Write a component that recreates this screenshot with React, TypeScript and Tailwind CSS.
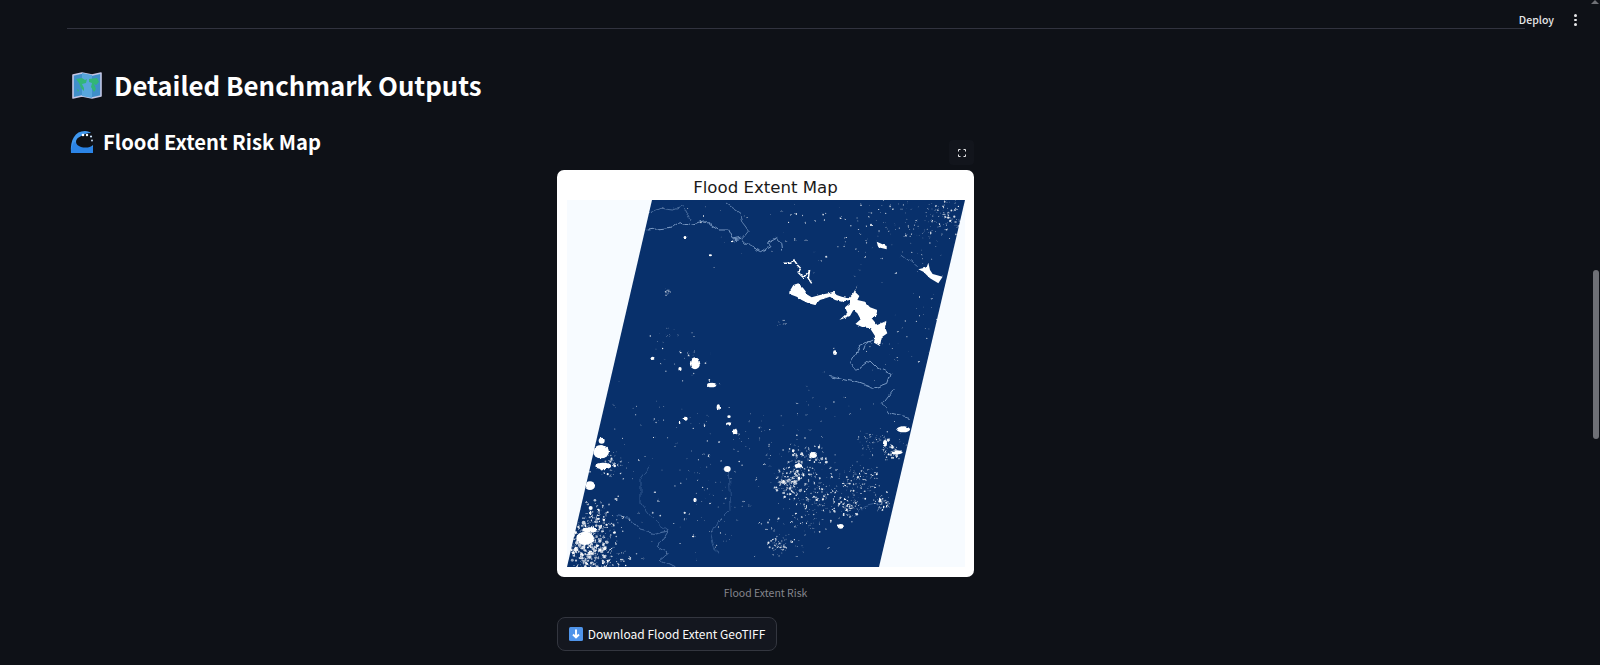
const sans = "font-['Noto_Sans_CJK_SC','Noto_Sans',sans-serif]";

// cx, cy, spread, count, max radius -- in zoom coordinates of the map crop
type Cluster = [number, number, number, number, number];

const upperClusters: Cluster[] = [
  [1220, 250, 30, 90, 3],
  [1140, 300, 60, 90, 2],
  [960, 280, 90, 60, 2.4],
  [760, 260, 95, 36, 2.6],
  [1160, 560, 45, 30, 2.2],
  [1080, 640, 60, 30, 2.6],
  [440, 700, 40, 18, 3],
  [380, 620, 32, 18, 1.5],
  [480, 290, 85, 14, 2],
  [382, 485, 7, 14, 2],
  [726, 578, 7, 12, 1.6],
];

const lowerClusters: Cluster[] = [
  [800, 205, 38, 90, 4],
  [750, 280, 24, 130, 5],
  [780, 240, 26, 50, 3],
  [850, 315, 32, 110, 3.4],
  [965, 275, 32, 110, 3],
  [925, 350, 18, 60, 3.4],
  [1025, 340, 13, 40, 4],
  [800, 370, 45, 50, 2.5],
  [760, 420, 45, 40, 2.2],
  [715, 465, 18, 36, 3.6],
  [1000, 165, 32, 50, 2.2],
  [1060, 175, 18, 50, 5],
  [205, 225, 26, 50, 4],
  [165, 410, 40, 220, 4.5],
  [135, 470, 34, 220, 5.5],
  [160, 520, 32, 120, 5],
  [240, 510, 26, 36, 3.5],
  [500, 200, 115, 70, 2.4],
  [500, 400, 115, 70, 2.6],
  [650, 130, 60, 30, 2.2],
  [300, 60, 70, 18, 2],
  [900, 60, 75, 24, 2.2],
];

const blobs: [number, number, number, number][] = [
  [465, 700, 15, 18],
  [515, 765, 14, 7],
  [885, 668, 6, 7],
  [435, 322, 4, 4],
  [511, 376, 5, 3],
  [338, 685, 6, 5],
  [420, 717, 5, 6],
];

const lowerBlobs: [number, number, number, number][] = [
  [183, 185, 24, 20],
  [190, 228, 24, 10],
  [150, 287, 15, 13],
  [185, 152, 9, 9],
  [152, 354, 6, 6],
  [135, 445, 26, 20],
  [150, 420, 22, 8],
  [535, 52, 5, 9],
  [567, 102, 9, 5],
  [585, 125, 7, 9],
  [567, 80, 5, 4],
  [437, 86, 6, 6],
  [562, 237, 10, 9],
  [820, 195, 11, 9],
  [775, 227, 11, 6],
  [1090, 118, 20, 9],
  [1035, 160, 6, 10],
  [1070, 187, 18, 6],
  [902, 409, 9, 7],
  [465, 330, 5, 6],
  [228, 327, 5, 2],
];

function scatter(list: Cluster[], seed: number) {
  let s = seed;
  const rnd = () => {
    s = (s * 1664525 + 1013904223) % 4294967296;
    return s / 4294967296;
  };
  const dots: { x: number; y: number; r: number; o: number }[] = [];
  list.forEach(([cx, cy, spread, n, maxR]) => {
    for (let i = 0; i < n; i++) {
      const a = rnd() * Math.PI * 2;
      // gaussian falloff so the clusters thin out at the edges
      const d = Math.sqrt(-2 * Math.log(1 - rnd() * 0.999)) * spread;
      dots.push({
        x: cx + Math.cos(a) * d,
        y: cy + Math.sin(a) * d * 0.85,
        r: 0.9 + rnd() * rnd() * maxR,
        o: 0.55 + rnd() * 0.45,
      });
    }
  });
  return dots;
}

function FloodMap() {
  const up = scatter(upperClusters, 17);
  const low = scatter(lowerClusters, 91);
  return (
    <svg viewBox="0 0 398 367" className="block w-[398px] h-[367px] mx-auto">
      <defs>
        <clipPath id="swath">
          <polygon points="85,0 398,0 312,367 0,367" />
        </clipPath>
        <filter id="rough" x="0" y="0" width="100%" height="100%">
          <feTurbulence type="fractalNoise" baseFrequency="0.3" numOctaves="2" seed="4" />
          <feDisplacementMap in="SourceGraphic" scale="2.5" xChannelSelector="R" yChannelSelector="G" />
          <feGaussianBlur stdDeviation="0.45" />
        </filter>
        <filter id="winding" x="0" y="0" width="100%" height="100%">
          <feTurbulence type="fractalNoise" baseFrequency="0.1" numOctaves="2" seed="9" />
          <feDisplacementMap in="SourceGraphic" scale="7" xChannelSelector="R" yChannelSelector="G" />
          <feGaussianBlur stdDeviation="0.3" />
        </filter>
      </defs>
      <rect width="398" height="367" fill="#f7fbff" />
      <polygon points="85,0 398,0 312,367 0,367" fill="#08306b" />
      <g clipPath="url(#swath)">
        <g filter="url(#winding)">
          <rect width="398" height="367" fill="none" />
          <g transform="translate(-27 -70) scale(0.33333)" fill="none" stroke="#8aa8cf" strokeWidth="2.6" strokeLinejoin="round">
            <path d="M320 300 L370 295 L400 290 L420 275 L450 285 L500 275 L540 300 L565 300 L580 330 L605 325 L630 350 L665 365 L690 350 L680 340 L710 325 L725 340 L728 365" />
            <path d="M325 250 L360 235 L400 240 L430 230 L450 270" strokeWidth="1.6" />
            <path d="M555 220 L600 250 L610 280 L625 300 L605 325" strokeWidth="2" />
            <path d="M990 635 L960 650 L930 700 L950 720 L990 690 L1010 710 L1050 730 L1040 760 L1000 775 L960 760 L870 740" />
            <path d="M1085 375 L1130 410" strokeWidth="1.6" />
          </g>
          <g transform="translate(-27 190) scale(0.33333)" fill="none" stroke="#6a8dbd" strokeWidth="2" strokeLinejoin="round">
            <path d="M1060 0 L1030 40 L1050 70 L1110 85" stroke="#8aa8cf" strokeWidth="2.4" />
            <path d="M230 380 L270 385 L300 420 L340 430 L385 420 L355 470 L385 490 L360 510 L400 530" />
            <path d="M330 230 L300 270 L300 340 L330 380 L385 420" strokeWidth="1.3" />
            <path d="M570 360 L530 400 L515 430 L530 490" strokeWidth="1.3" />
            <path d="M565 250 L570 360" strokeWidth="1" />
            <path d="M940 380 L975 350 L1020 340" strokeWidth="1.3" />
          </g>
        </g>
        <g filter="url(#rough)">
          <rect width="398" height="367" fill="none" />
          {/* reservoir, traced from a 3x crop */}
          <g transform="translate(203 50) scale(0.33333)" fill="#ffffff">
            <path d="M58 125 L70 105 L85 100 L100 115 L108 125 L105 130 L125 142 L150 135 L175 130 L190 125 L200 135 L215 140 L235 145 L250 130 L262 105 L255 125 L268 138 L262 150 L285 155 L300 172 L322 180 L318 200 L305 205 L322 225 L350 212 L345 232 L352 250 L335 262 L330 288 L312 278 L315 258 L300 235 L278 232 L256 222 L272 208 L262 190 L250 180 L240 198 L208 210 L232 188 L225 172 L240 160 L240 150 L215 155 L195 150 L180 140 L150 150 L135 165 L115 160 L95 150 L80 140 L58 132 Z" />
            <path d="M40 40 L62 40 L72 30 L82 45 L92 55 L85 68 L100 82 L112 70 L118 65 L115 85 L125 100" fill="none" stroke="#ffffff" strokeWidth="4.5" />
            <path d="M310 270 L288 280 L280 300" fill="none" stroke="#8aa8cf" strokeWidth="2.6" />
          </g>
          <g transform="translate(-27 -70) scale(0.33333)" fill="#ffffff">
            <path d="M1135 418 L1160 412 L1165 398 L1170 420 L1178 432 L1208 440 L1195 460 L1170 445 L1150 425 Z" />
            <path d="M1010 335 L1040 348 L1040 358 L1015 352 Z" />
            {blobs.map(([x, y, rx, ry]) => (
              <ellipse key={`${x}-${y}`} cx={x} cy={y} rx={rx} ry={ry} />
            ))}
            {up.map((d, i) => (
              <circle key={i} cx={d.x} cy={d.y} r={d.r} opacity={d.o} />
            ))}
          </g>
          <g transform="translate(-27 190) scale(0.33333)" fill="#ffffff">
            {lowerBlobs.map(([x, y, rx, ry]) => (
              <ellipse key={`${x}-${y}`} cx={x} cy={y} rx={rx} ry={ry} />
            ))}
            {low.map((d, i) => (
              <circle key={i} cx={d.x} cy={d.y} r={d.r} opacity={d.o} />
            ))}
          </g>
        </g>
      </g>
    </svg>
  );
}

function MapEmoji() {
  return (
    <svg viewBox="0 0 30 27" className="w-[30px] h-[27px] shrink-0">
      <path d="M1 3 L10 1 L20 3 L29 1 L29 24 L20 26 L10 24 L1 26 Z" fill="#3f8fc9" stroke="#c3c6e4" strokeWidth="1.6" strokeLinejoin="round" />
      <path d="M10 1 L20 3 L20 26 L10 24 Z" fill="#58a6dc" />
      <path d="M4 7 L10 6 L13 8 L15 7 L14 11 L10 12 L12 16 L12 19 L9 16 L7 11 Z" fill="#32b678" />
      <path d="M17 7 L25 6 L27 10 L24 13 L22 12 L24 17 L22 20 L19 15 L20 11 L17 10 Z" fill="#32b678" />
      <path d="M5 17 L7 18 L6 20 Z" fill="#32b678" />
    </svg>
  );
}

function WaveEmoji() {
  return (
    <svg viewBox="0 0 24 24" className="w-[24px] h-[24px] shrink-0">
      <path d="M1 23 C0 10 5 1 15 1 C18 1 20 2 21 3 C16 3 12 5 10 7 L23 8 L23 23 Z" fill="#3f97ee" />
      <path d="M1 23 C1 19 2 15 4 12 L23 17 L23 23 Z" fill="#2b84e6" />
      <path d="M6 12 C6 8 10 6 15 6 C18 6 21 7 23 8 L23 15 C20 18 15 18 11 17 C8 16 6 14 6 12 Z" fill="#0e1117" />
      <circle cx="13" cy="5" r="1.3" fill="#ffffff" />
      <circle cx="17" cy="5" r="1.2" fill="#ffffff" />
      <circle cx="21" cy="6.5" r="1.1" fill="#cfe6ff" />
      <circle cx="22" cy="10.5" r="0.9" fill="#cfe6ff" />
    </svg>
  );
}

function DownEmoji() {
  return (
    <svg viewBox="0 0 14 14" className="w-[14px] h-[14px] shrink-0">
      <rect width="14" height="14" rx="1.5" fill="#4f94ea" />
      <path d="M7 2.5 V10 M4 7.5 L7 10.5 L10 7.5" fill="none" stroke="#ffffff" strokeWidth="1.9" />
    </svg>
  );
}

export default function App() {
  return (
    <div className={`relative h-[665px] overflow-hidden bg-[#0e1117] text-white ${sans}`}>
      {/* header overlays the page */}
      <div className="absolute right-[23px] top-[11px] flex items-center gap-[20px] h-[18px]">
        <span className="text-[10.5px] font-medium text-[#e6e6e8] leading-none">Deploy</span>
        <div className="flex flex-col gap-[2px]">
          <span className="block w-[3px] h-[2.5px] rounded-full bg-[#e6e6e8]" />
          <span className="block w-[3px] h-[2.5px] rounded-full bg-[#e6e6e8]" />
          <span className="block w-[3px] h-[2.5px] rounded-full bg-[#e6e6e8]" />
        </div>
      </div>

      {/* page scrollbar */}
      <div className="absolute right-[1px] top-[270px] w-[6px] h-[169px] rounded-[3px] bg-[#6e7076]" />
      <div className="absolute right-[1px] top-0 w-0 h-0 border-x-[4px] border-x-transparent border-b-[4px] border-b-[#6e7076]" />

      <div className="pl-[67px] pr-[75px] pt-[28px]">
        <div className="h-px bg-[#31333f]" />
      </div>

      <h2 className="mt-[39px] ml-[72px] flex items-center gap-[12px] h-[34px] text-[25.8px] font-semibold leading-none">
        <MapEmoji />
        <span>Detailed Benchmark Outputs</span>
      </h2>

      <h3 className="mt-[27px] ml-[70px] flex items-center gap-[9px] h-[26px] text-[20.2px] font-semibold leading-none">
        <WaveEmoji />
        <span>Flood Extent Risk Map</span>
      </h3>

      <div className="relative mt-[12px] ml-[557px] w-[417px] pt-[3px]">
        <button className="absolute right-0 top-[-27px] w-[25px] h-[25px] rounded-[4px] bg-[#12151c] flex items-center justify-center">
          <svg viewBox="0 0 8 8" className="w-[8px] h-[8px]" fill="none" stroke="#e6e6e8" strokeWidth="1">
            <path d="M0.5 2.5 V0.5 H2.5 M5.5 0.5 H7.5 V2.5 M7.5 5.5 V7.5 H5.5 M2.5 7.5 H0.5 V5.5" />
          </svg>
        </button>

        <div className="h-[407px] rounded-[7px] bg-white flex flex-col items-center overflow-hidden">
          <div className="h-[30px] flex items-center font-['DejaVu_Sans',sans-serif] text-[16.6px] leading-none text-[#1a1a1a] pt-[6px]">
            Flood Extent Map
          </div>
          <FloodMap />
        </div>

        <p className="mt-[7px] h-[18px] text-center text-[10.5px] leading-[18px] text-[#85868c]">Flood Extent Risk</p>

        <button className="mt-[15px] h-[34px] w-[220px] rounded-[8px] border border-[#33363f] bg-[#14171f] flex items-center justify-center gap-[5px] text-[12px] leading-none text-[#fafafa] whitespace-nowrap">
          <DownEmoji />
          <span>Download Flood Extent GeoTIFF</span>
        </button>
      </div>
    </div>
  );
}
